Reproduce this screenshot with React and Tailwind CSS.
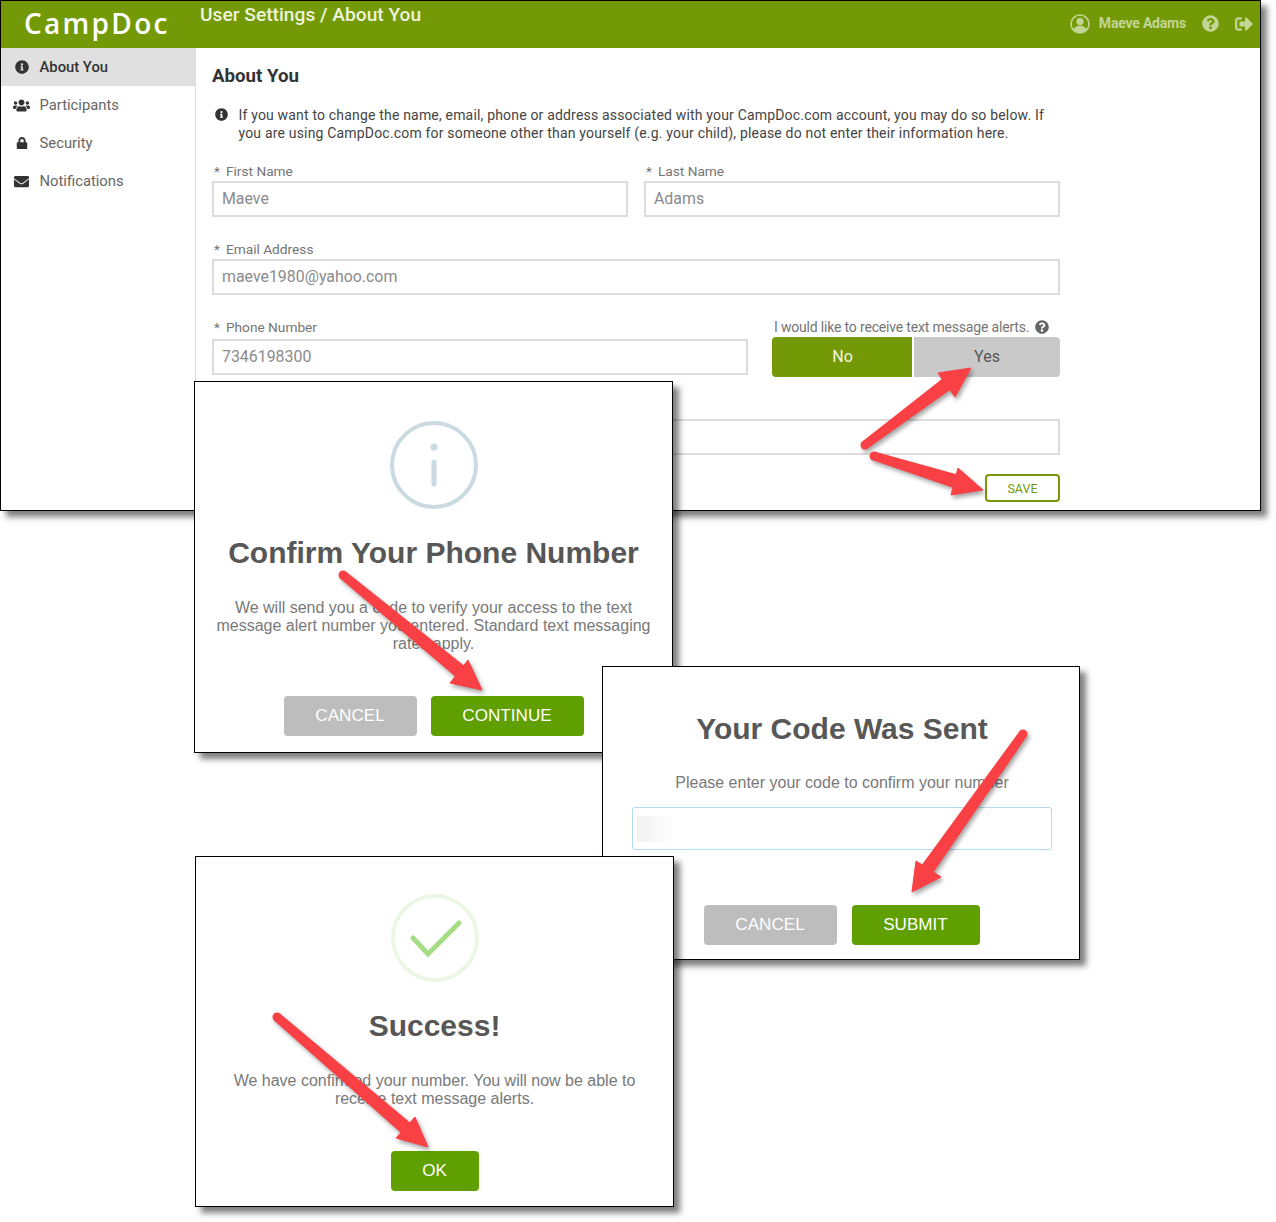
import React from "react";
import {
  FaInfoCircle,
  FaUsers,
  FaLock,
  FaEnvelope,
  FaQuestionCircle,
  FaSignOutAlt,
} from "react-icons/fa";

const roboto = "font-[Roboto,'Liberation_Sans',sans-serif]";
const arial = "font-['Liberation_Sans',Arial,sans-serif]";

const navItems = [
  { label: "About You", Icon: FaInfoCircle, size: "text-[14px] ml-[1px]", active: true },
  { label: "Participants", Icon: FaUsers, size: "text-[17px] -ml-[1px]" },
  { label: "Security", Icon: FaLock, size: "text-[12px] ml-[2px]" },
  { label: "Notifications", Icon: FaEnvelope, size: "text-[15px]" },
];

const arrows = [
  { line: [865, 445, 948, 383], head: "971,368 938,373 955,397" },
  { line: [874, 456, 958, 482], head: "983,490 958,468 951,495" },
  { line: [343, 575, 462, 673], head: "482,690 468,660 450,683" },
  { line: [1023, 734, 926, 871], head: "912,892 916,861 941,877" },
  { line: [277, 1017, 407, 1129], head: "428,1147 415,1117 396,1138" },
];

// shaft gets a bit wider towards the arrow head
function shaftPoints([x1, y1, x2, y2]) {
  const len = Math.hypot(x2 - x1, y2 - y1);
  const nx = -(y2 - y1) / len;
  const ny = (x2 - x1) / len;
  const a = 4.5;
  const b = 7;
  return [
    `${x1 + nx * a},${y1 + ny * a}`,
    `${x2 + nx * b},${y2 + ny * b}`,
    `${x2 - nx * b},${y2 - ny * b}`,
    `${x1 - nx * a},${y1 - ny * a}`,
  ].join(" ");
}

function Field({ label, value, className = "", labelClass = "h-[20px]" }) {
  return (
    <div className={className}>
      <div className={`pl-[2px] text-[13.7px] leading-[20px] text-[#757575] ${labelClass}`}>
        <span className="mr-[6px]">*</span>
        {label}
      </div>
      <div className="flex h-[36px] items-center border-2 border-[#dddddd] bg-white px-[8px] text-[15.9px] text-[#8b8b8b]">
        {value}
      </div>
    </div>
  );
}

function ModalButton({ children, gray, className = "" }) {
  return (
    <div
      className={`flex h-[40px] items-center justify-center rounded-[4px] text-[17.1px] text-white ${gray ? "bg-[#bdbdbd]" : "bg-[#5fa000]"} ${className}`}
    >
      {children}
    </div>
  );
}

function Modal({ className = "", children }) {
  return (
    <div
      className={`absolute flex flex-col items-center border border-black bg-white text-center shadow-[6px_6px_6px_rgba(0,0,0,0.5)] ${arial} ${className}`}
    >
      {children}
    </div>
  );
}

function UserRing() {
  return (
    <svg width="20" height="20" viewBox="0 0 20 20" className="flex-none">
      <circle cx="10" cy="10" r="9" fill="none" stroke="currentColor" strokeWidth="1.6" />
      <circle cx="10" cy="7.6" r="3.6" fill="currentColor" />
      <path d="M3.6 16 C4.4 12.6 7 11.8 10 11.8 C13 11.8 15.6 12.6 16.4 16 C14.8 17.8 12.6 18.6 10 18.6 C7.4 18.6 5.2 17.8 3.6 16 Z" fill="currentColor" />
    </svg>
  );
}

function MainWindow() {
  return (
    <div
      className={`absolute left-0 top-0 flex h-[511px] w-[1261px] flex-col border border-black bg-white shadow-[6px_6px_6px_rgba(0,0,0,0.5)] ${roboto}`}
    >
      <header className="flex h-[47px] items-center bg-[#739a06] text-white">
        <div className="w-[199px] pb-[3px] pl-[23px] font-['Open_Sans',sans-serif] text-[28px] font-semibold leading-none tracking-[2.3px]">
          CampDoc
        </div>
        <div className="-mt-[19px] text-[19.2px] font-medium text-[#eef3dc]">
          User Settings / About You
        </div>
        <div className="ml-auto flex items-center pb-[2px] pr-[7px] text-[#c3d594]">
          <UserRing />
          <span className="ml-[9px] text-[14px] font-bold tracking-[-0.2px]">
            Maeve Adams
          </span>
          <FaQuestionCircle className="ml-[16px] text-[17px]" />
          <FaSignOutAlt className="ml-[16px] text-[18px]" />
        </div>
      </header>
      <div className="flex flex-1">
        <nav className="w-[195px] border-r border-[#dddddd]">
          {navItems.map(({ label, Icon, size, active }) => (
            <div
              key={label}
              className={`flex h-[38px] items-center pl-[13px] text-[14.8px] ${active ? "bg-[#e0e0e0] font-medium text-[#333333]" : "text-[#666666]"}`}
            >
              <span className="flex w-[25.5px] text-[#333333]">
                <Icon className={size} />
              </span>
              {label}
            </div>
          ))}
        </nav>
        <main className="box-content w-[848px] flex-none pl-[16px]">
          <h1 className="mt-[15px] text-[18.7px] font-bold leading-[26px] text-[#333333]">
            About You
          </h1>
          <div className="mt-[17px] flex text-[14px] leading-[18px] tracking-[0.18px] text-[#444444]">
            <FaInfoCircle className="ml-[3px] mr-[10.5px] mt-[2px] flex-none text-[13px] text-[#333333]" />
            <p className="w-[815px]">
              If you want to change the name, email, phone or address associated with your CampDoc.com account, you may do so below. If you are using CampDoc.com for someone other than yourself (e.g. your child), please do not enter their information here.
            </p>
          </div>
          <div className="mt-[19px] flex gap-[16px]">
            <Field label="First Name" value="Maeve" className="w-[416px]" />
            <Field label="Last Name" value="Adams" className="w-[416px]" />
          </div>
          <Field label="Email Address" value="maeve1980@yahoo.com" className="mt-[22px]" />
          <div className="mt-[22px] flex items-start">
            <Field label="Phone Number" value="7346198300" className="w-[536px]" labelClass="h-[22px]" />
            <div className="ml-[24px] w-[288px]">
              <div className="flex h-[20px] items-center pl-[2px] text-[14px] tracking-[-0.18px] text-[#757575]">
                I would like to receive text message alerts.
                <FaQuestionCircle className="ml-[6px] text-[14px] text-[#666666]" />
              </div>
              <div className="flex h-[40px] gap-[2px] text-[16px]">
                <div className="flex w-[140px] items-center justify-center rounded-l-[4px] bg-[#739a06] pl-[1px] text-[#f2f6df]">
                  No
                </div>
                <div className="flex flex-1 items-center justify-center rounded-r-[4px] bg-[#c9c9c9] text-[#555555]">
                  Yes
                </div>
              </div>
            </div>
          </div>
          <Field label="Address" value="" className="mt-[22px]" />
          <div className="mt-[19px] flex justify-end">
            <div className="flex h-[28px] w-[75px] items-center justify-center rounded-[4px] border-2 border-[#739a06] pt-[2px] text-[12.5px] text-[#739a06]">
              SAVE
            </div>
          </div>
        </main>
      </div>
    </div>
  );
}

function Arrows() {
  return (
    <svg
      className="absolute left-0 top-0 z-50 drop-shadow-[2px_3px_2px_rgba(0,0,0,0.35)]"
      width="1276"
      height="1222"
    >
      {arrows.map(({ line, head }) => (
        <g key={head} fill="#f84045">
          <circle cx={line[0]} cy={line[1]} r="4.5" />
          <polygon points={shaftPoints(line)} />
          <polygon points={head} stroke="#f84045" strokeWidth="1" strokeLinejoin="round" />
        </g>
      ))}
    </svg>
  );
}

export default function App() {
  return (
    <div className="relative h-[1222px] w-[1276px] overflow-hidden bg-white">
      <MainWindow />

      <Modal className="left-[194px] top-[381px] z-10 h-[372px] w-[479px]">
        <svg className="mt-[39px] flex-none" width="88" height="88" viewBox="0 0 88 88">
          <circle cx="44" cy="44" r="42" fill="none" stroke="#c9dae1" strokeWidth="4" />
          <circle cx="44" cy="26" r="3.5" fill="#c9dae1" />
          <line x1="44" y1="41" x2="44" y2="63" stroke="#c9dae1" strokeWidth="5" strokeLinecap="round" />
        </svg>
        <h2 className="mt-[26px] text-[30px] font-bold leading-[36px] text-[#575757]">
          Confirm Your Phone Number
        </h2>
        <p className="mt-[28px] w-[440px] text-[16px] leading-[18px] text-[#797979]">
          We will send you a code to verify your access to the text message alert number you entered. Standard text messaging rates apply.
        </p>
        <div className="mt-[43px] flex gap-[14px]">
          <ModalButton gray className="w-[133px]">CANCEL</ModalButton>
          <ModalButton className="w-[153px]">CONTINUE</ModalButton>
        </div>
      </Modal>

      <Modal className="left-[602px] top-[666px] z-20 h-[294px] w-[478px] pl-[2px]">
        <h2 className="mt-[44px] text-[30px] font-bold leading-[36px] text-[#575757]">
          Your Code Was Sent
        </h2>
        <p className="mt-[27px] text-[16px] leading-[18px] text-[#797979]">
          Please enter your code to confirm your number
        </p>
        <div className="mt-[15px] flex h-[43px] w-[420px] items-center rounded-[3px] border border-[#b4dbed] pl-[4px]">
          <div className="h-[26px] w-[38px] bg-gradient-to-r from-[#f1f1f1] to-white" />
        </div>
        <div className="mt-[55px] flex gap-[15px] pr-[1px]">
          <ModalButton gray className="w-[133px]">CANCEL</ModalButton>
          <ModalButton className="w-[128px]">SUBMIT</ModalButton>
        </div>
      </Modal>

      <Modal className="left-[195px] top-[856px] z-30 h-[351px] w-[479px]">
        <svg className="mt-[37px] flex-none" width="88" height="88" viewBox="0 0 88 88">
          <circle cx="44" cy="44" r="42" fill="none" stroke="#ebf7e4" strokeWidth="4" />
          <polyline
            points="22,44 37,60 68,29"
            fill="none"
            stroke="#a5dc86"
            strokeWidth="5"
            strokeLinecap="round"
            strokeLinejoin="miter"
          />
        </svg>
        <h2 className="mt-[26px] text-[30px] font-bold leading-[36px] text-[#575757]">
          Success!
        </h2>
        <p className="mt-[28px] w-[440px] text-[16px] leading-[18px] text-[#797979]">
          We have confirmed your number. You will now be able to receive text message alerts.
        </p>
        <ModalButton className="mt-[43px] w-[88px]">OK</ModalButton>
      </Modal>

      <Arrows />
    </div>
  );
}
